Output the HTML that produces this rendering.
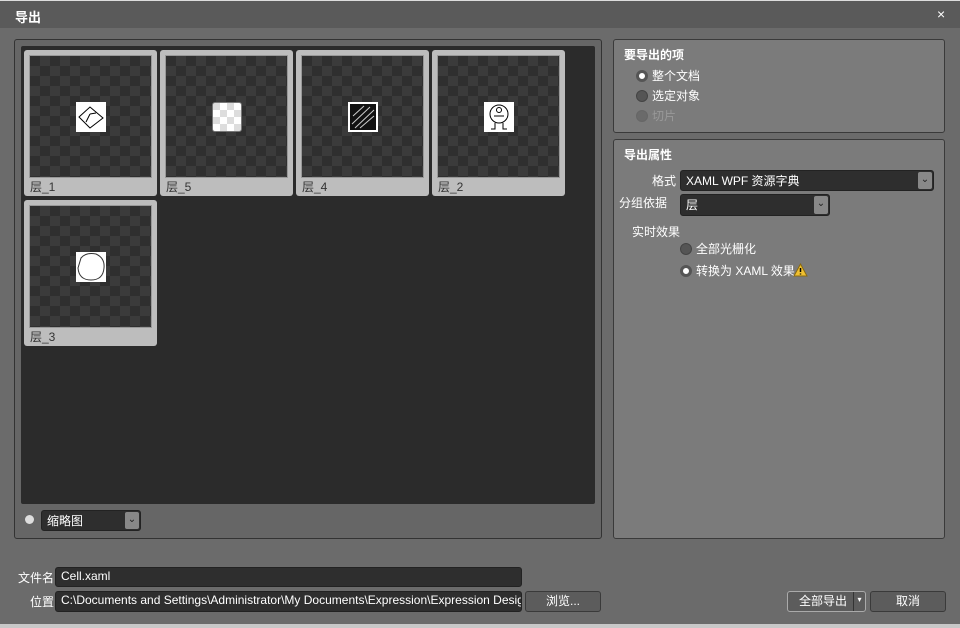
<!DOCTYPE html>
<html><head><meta charset="utf-8"><style>
*{margin:0;padding:0;box-sizing:border-box}
body{width:960px;height:628px;background:#6b6b6b;font-family:"Liberation Sans","Noto Sans CJK SC",sans-serif;font-size:12px;color:#eee;position:relative;overflow:hidden}
.a{position:absolute}
.title{left:0;top:0;width:960px;height:28px;background:#5a5a5a;border-top:1px solid #ddd;}
.title span{position:absolute;left:15px;top:6px;font-weight:bold;font-size:13px;color:#fff}
.lp{left:14px;top:39px;width:588px;height:500px;border:1px solid #333;border-radius:3px;background:#666}
.dark{left:21px;top:46px;width:574px;height:458px;background:#2b2b2b;border-radius:2px}
.th{width:133px;height:146px;background:#bdbdbd;border-radius:3px}
.ck{position:absolute;left:5px;top:5px;width:123px;height:123px;background-color:#2f2f2f;background-image:linear-gradient(45deg,#3b3b3b 25%,transparent 25%,transparent 75%,#3b3b3b 75%),linear-gradient(45deg,#3b3b3b 25%,transparent 25%,transparent 75%,#3b3b3b 75%);background-size:20px 20px;background-position:0 0,10px 10px;border:1px solid #999}
.lb{position:absolute;left:6px;top:128px;color:#333;font-size:12px}
.img{position:absolute;left:46px;top:46px;width:30px;height:30px;background:#fff}
.rp{left:613px;width:332px;border:1px solid #3a3a3a;border-radius:3px;background:#7b7b7b}
.h{position:absolute;font-weight:bold;color:#fff;font-size:12px}
.rd{position:absolute;width:12px;height:12px;border-radius:50%;background:#555;border:1px solid #444}
.rd.on{background:#fff;border:3px solid #555}
.t{position:absolute;color:#fff;white-space:nowrap}
.inp{position:absolute;background:#2e2e2e;border:1px solid #222;border-radius:3px;color:#fff;padding:1px 5px;white-space:nowrap;overflow:hidden}
.dd{position:absolute;right:1px;top:1px;width:14px;bottom:1px;background:#888;border-radius:2px;color:#222;font-size:10px;text-align:center;line-height:16px}
.btn{position:absolute;background:#5c5c5c;border:1px solid #3a3a3a;border-radius:3px;color:#fff;text-align:center;line-height:19px}
</style></head><body>
<div class="a title"><span>导出</span><span style="left:937px;top:5px;font-weight:normal;font-size:14px">×</span></div>
<div class="a lp"></div>
<div class="a dark"></div>
<div class="a th" style="left:24px;top:50px"><div class="ck"><div class="img"><svg width="30" height="30"><path d="M3 15 L14 5 L27 16 L14 26 Z M14 12 L20 11 M14 12 L10 20" stroke="#000" fill="none"/></svg></div></div><div class="lb">层_1</div></div>
<div class="a th" style="left:160px;top:50px"><div class="ck"><div class="img" style="background:repeating-conic-gradient(#fff 0 25%,#ddd 0 50%) 0 0/14px 14px;border:1px solid #777;border-radius:3px"></div></div><div class="lb">层_5</div></div>
<div class="a th" style="left:296px;top:50px"><div class="ck"><div class="img" style="background:#111;border:2px solid #fff"><svg width="26" height="26"><path d="M2 20 L20 3 M5 24 L24 6 M3 12 L14 2 M10 24 L24 12" stroke="#ccc"/></svg></div></div><div class="lb">层_4</div></div>
<div class="a th" style="left:432px;top:50px"><div class="ck"><div class="img"><svg width="30" height="30"><circle cx="15" cy="12" r="9" stroke="#000" fill="none"/><circle cx="15" cy="8" r="2.5" stroke="#000" fill="none"/><path d="M10 14 h10 M11 21 v6 h-4 M19 21 v6 h4" stroke="#000" fill="none"/></svg></div></div><div class="lb">层_2</div></div>
<div class="a th" style="left:24px;top:200px"><div class="ck"><div class="img"><svg width="30" height="30"><path d="M5 6 Q10 0 20 2 Q29 6 28 16 Q27 28 15 28 Q3 28 2 16 Z" stroke="#333" fill="#fff"/></svg></div></div><div class="lb">层_3</div></div>
<div class="rd" style="left:25px;top:515px;width:9px;height:9px;background:#ddd;border:none"></div>
<div class="inp" style="left:41px;top:510px;width:100px;height:21px">缩略图<div class="dd">⌄</div></div>

<div class="a rp" style="top:39px;height:94px"></div>
<div class="h" style="left:624px;top:46px">要导出的项</div>
<div class="rd on" style="left:636px;top:70px"></div><div class="t" style="left:652px;top:67px">整个文档</div>
<div class="rd" style="left:636px;top:90px"></div><div class="t" style="left:652px;top:87px">选定对象</div>
<div class="rd" style="left:636px;top:110px;background:#6a6a6a;border-color:#666"></div><div class="t" style="left:652px;top:107px;color:#999">切片</div>

<div class="a rp" style="top:139px;height:400px"></div>
<div class="h" style="left:624px;top:146px">导出属性</div>
<div class="t" style="left:652px;top:172px">格式</div>
<div class="inp" style="left:680px;top:170px;width:254px;height:21px">XAML WPF 资源字典<div class="dd">⌄</div></div>
<div class="t" style="left:619px;top:194px">分组依据</div>
<div class="inp" style="left:680px;top:194px;width:150px;height:22px">层<div class="dd">⌄</div></div>
<div class="t" style="left:632px;top:223px">实时效果</div>
<div class="rd" style="left:680px;top:243px"></div><div class="t" style="left:696px;top:240px">全部光栅化</div>
<div class="rd on" style="left:680px;top:265px"></div><div class="t" style="left:696px;top:262px">转换为 XAML 效果</div>
<svg class="a" style="left:793px;top:263px" width="15" height="14"><path d="M7.5 1 L14 13 H1 Z" fill="#f0c030" stroke="#8a6a10"/><path d="M7.5 5 V9 M7.5 10.5 V11.5" stroke="#000" stroke-width="1.5"/></svg>

<div class="t" style="left:18px;top:569px">文件名</div>
<div class="inp" style="left:55px;top:567px;width:467px;height:20px">Cell.xaml</div>
<div class="t" style="left:30px;top:593px">位置</div>
<div class="inp" style="left:55px;top:591px;width:467px;height:21px">C:\Documents and Settings\Administrator\My Documents\Expression\Expression Design</div>
<div class="btn" style="left:525px;top:591px;width:76px;height:21px">浏览...</div>
<div class="btn" style="left:787px;top:591px;width:79px;height:21px;border-color:#aaa;text-align:left;padding-left:11px">全部导出<span style="position:absolute;right:0;top:0;width:12px;height:19px;border-left:1px solid #333;font-size:8px;line-height:16px;text-align:center">▾</span></div>
<div class="btn" style="left:870px;top:591px;width:76px;height:21px">取消</div>
<div class="a" style="left:0;top:624px;width:960px;height:4px;background:#c8c8c8"></div>
</body></html>
